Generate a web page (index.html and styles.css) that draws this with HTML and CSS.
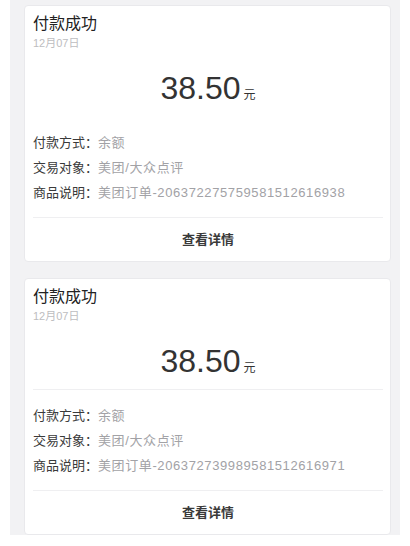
FILE: index.html
```html
<!DOCTYPE html>
<html lang="zh-CN">

    <head>
        <meta charset="UTF-8">
        <meta name="viewport" content="width=device-width, initial-scale=1.0">
        <title>付款记录</title>
        <link rel="stylesheet" href="styles.css">
    </head>

    <body>
        <div class="list">
            <div class="card">
                <div class="title">付款成功</div>
                <div class="date">12月07日</div>
                <div class="amount"><span class="num">38.50</span><span class="unit">元</span></div>
                <div class="rows">
                    <div class="row"><span class="label">付款方式：</span><span class="value">余额</span></div>
                    <div class="row"><span class="label">交易对象：</span><span class="value">美团/大众点评</span></div>
                    <div class="row"><span class="label">商品说明：</span><span class="value">美团订单-206372275759581512616938</span></div>
                </div>
                <div class="detail">查看详情</div>
            </div>

            <div class="card">
                <div class="title">付款成功</div>
                <div class="date">12月07日</div>
                <div class="amount amount-line"><span class="num">38.50</span><span class="unit">元</span></div>
                <div class="rows">
                    <div class="row"><span class="label">付款方式：</span><span class="value">余额</span></div>
                    <div class="row"><span class="label">交易对象：</span><span class="value">美团/大众点评</span></div>
                    <div class="row"><span class="label">商品说明：</span><span class="value">美团订单-206372739989581512616971</span></div>
                </div>
                <div class="detail">查看详情</div>
            </div>
        </div>
    </body>

</html>
```

FILE: styles.css
```css
body {
    font-family: "Liberation Sans", "Noto Sans CJK SC", sans-serif;
    background-color: #fff;
    margin: 0;
    padding: 0;
}

.list {
    margin-left: 10px;
    width: 367px;
    background-color: #f2f2f4;
    padding: 5px 9px 0 14px;
    display: flex;
    flex-direction: column;
    gap: 16px;
}

.card {
    background: #fff;
    border: 1px solid #e9e9ec;
    border-radius: 4px;
    padding: 8px 7px 0 8px;
    height: 247px;
}

.title {
    font-size: 16px;
    line-height: 20px;
    color: #222;
}

.date {
    margin-top: 2px;
    font-size: 11px;
    line-height: 14px;
    color: #bdbdc0;
}

.amount {
    margin-top: 18px;
    padding-bottom: 1px;
    border-bottom: 1px solid transparent;
    text-align: center;
    line-height: 40px;
    color: #333;
}

.amount-line {
    border-bottom-color: #efeff1;
}

.num {
    font-size: 32px;
}

.unit {
    font-size: 12px;
    margin-left: 3px;
}

.rows {
    padding: 13px 0 12px;
    border-bottom: 1px solid #efeff1;
}

.row {
    font-size: 13px;
    line-height: 25px;
    white-space: nowrap;
}

.label {
    color: #3a3a3a;
}

.value {
    color: #a2a2a6;
    letter-spacing: 0.6px;
}

.detail {
    text-align: center;
    font-size: 13px;
    line-height: 44px;
    color: #3a3a3a;
    font-weight: bold;
}
```
